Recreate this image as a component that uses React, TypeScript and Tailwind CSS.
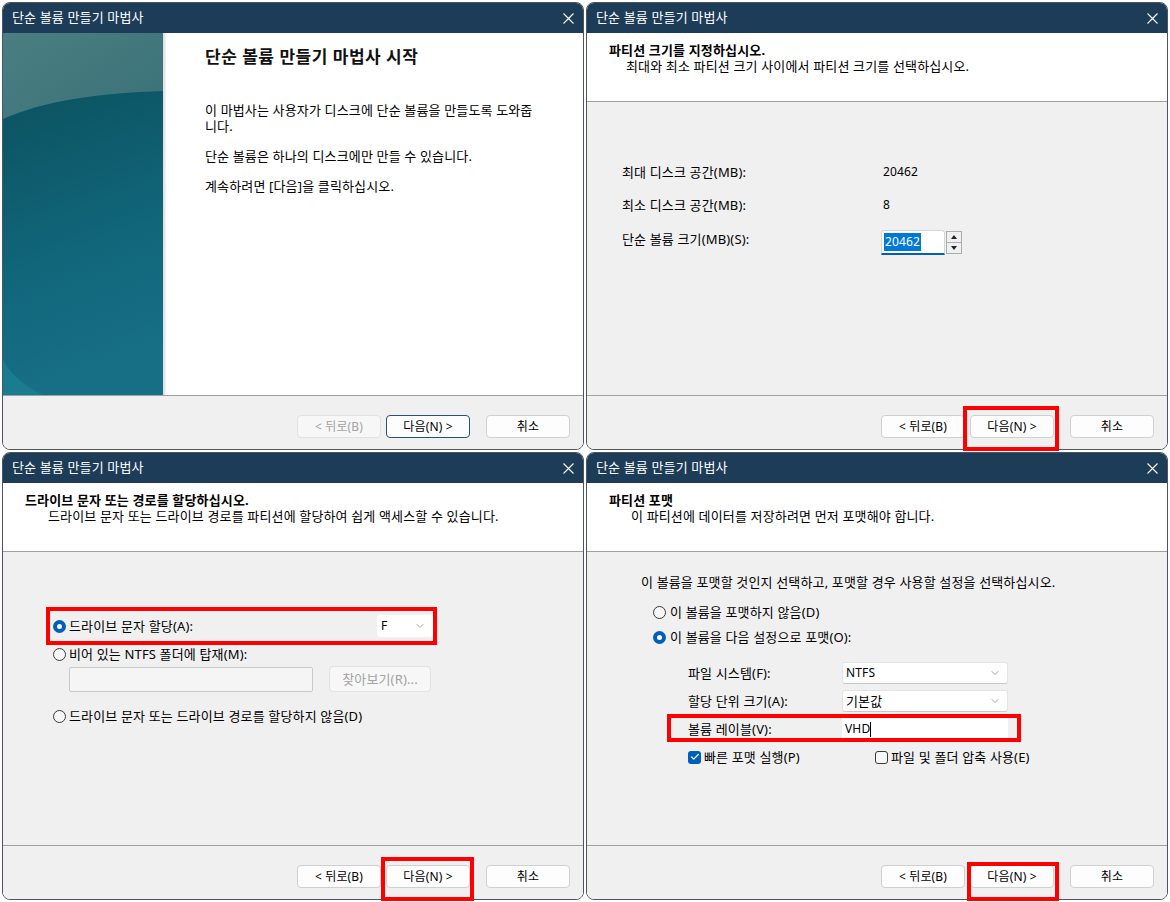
import React from "react";
import { ChevronDown, Check } from "lucide-react";

const TITLE = "단순 볼륨 만들기 마법사";

const CloseIcon = () => (
  <svg width="11" height="11" viewBox="0 0 11 11">
    <path d="M0.5 0.5L10.5 10.5M10.5 0.5L0.5 10.5" stroke="#fff" strokeWidth="1.1" />
  </svg>
);

const Btn = ({
  children,
  disabled,
  focused,
  className = "",
}: {
  children: React.ReactNode;
  disabled?: boolean;
  focused?: boolean;
  className?: string;
}) => {
  let look = "bg-[#fdfdfd] border-[#d0d0d0] text-black";
  if (disabled) look = "bg-[#f7f7f7] border-[#e2e2e2] text-[#a3a3a3]";
  if (focused) look = "bg-[#fdfdfd] border-[#2c4f72] text-black";
  return (
    <div
      className={`w-[84px] h-[23px] rounded-[4px] border flex items-center justify-center text-[12px] leading-[16px] ${look} ${className}`}
    >
      {children}
    </div>
  );
};

const Footer = ({ backDisabled, focusNext, redBox }: { backDisabled?: boolean; focusNext?: boolean; redBox?: string }) => (
  <div className="h-[54px] shrink-0 border-t border-[#a0a0a0] bg-[#f0f0f0] rounded-b-[7px] flex justify-end items-start pt-[19px] pr-[13px]">
    <Btn disabled={backDisabled}>&lt; 뒤로(B)</Btn>
    <div className="relative ml-[5px]">
      <Btn focused={focusNext}>다음(N) &gt;</Btn>
      {redBox && <div className={`absolute z-10 border-[4px] border-[#ff0000] ${redBox}`} />}
    </div>
    <Btn className="ml-[16px]">취소</Btn>
  </div>
);

const Win = ({ children, footer }: { children: React.ReactNode; footer: React.ReactNode }) => (
  <div className="flex flex-col border border-[#4d5560] rounded-[8px] bg-white">
    <div className="h-[30px] shrink-0 bg-[#1d3c58] rounded-t-[7px] flex items-center justify-between pl-[9px] pr-[9px] text-white text-[13px]">
      <span>{TITLE}</span>
      <CloseIcon />
    </div>
    <div className="flex-1 flex flex-col min-h-0">{children}</div>
    {footer}
  </div>
);

const Header = ({ title, sub, subPad }: { title: string; sub: string; subPad: string }) => (
  <div className="h-[69px] shrink-0 bg-white border-b border-[#a0a0a0] pl-[22px] pt-[9px] text-[13px] leading-[16px]">
    <div className="font-bold">{title}</div>
    <div className={subPad}>{sub}</div>
  </div>
);

const Radio = ({ checked }: { checked?: boolean }) =>
  checked ? (
    <span className="w-[13px] h-[13px] rounded-full bg-[#005fb8] flex items-center justify-center shrink-0">
      <span className="w-[5px] h-[5px] rounded-full bg-white" />
    </span>
  ) : (
    <span className="w-[13px] h-[13px] rounded-full border border-[#3a3a3a] bg-[#f7f7f7] shrink-0" />
  );

const CheckBox = ({ checked }: { checked?: boolean }) =>
  checked ? (
    <span className="w-[13px] h-[13px] rounded-[3px] bg-[#005fb8] flex items-center justify-center shrink-0">
      <Check size={10} strokeWidth={3} color="#fff" />
    </span>
  ) : (
    <span className="w-[13px] h-[13px] rounded-[3px] border border-[#3a3a3a] bg-[#f7f7f7] shrink-0" />
  );

const Select = ({ value, className = "" }: { value: string; className?: string }) => (
  <div
    className={`h-[22px] bg-white border border-[#e4e4e4] border-b-[#c8c8c8] rounded-[3px] flex items-center justify-between pl-[3px] pr-[6px] ${className}`}
  >
    <span>{value}</span>
    <ChevronDown size={12} strokeWidth={1.2} color="#666" />
  </div>
);

const SidePanel = () => (
  <svg width="160" height="362" viewBox="0 0 160 362" preserveAspectRatio="none" className="shrink-0 block">
    <defs>
      <linearGradient id="top" x1="0" y1="0" x2="0.3" y2="1">
        <stop offset="0" stopColor="#4a7e81" />
        <stop offset="1" stopColor="#2a666f" />
      </linearGradient>
      <linearGradient id="body" x1="0" y1="0" x2="0.2" y2="1">
        <stop offset="0" stopColor="#0b5260" />
        <stop offset="0.6" stopColor="#11667a" />
        <stop offset="1" stopColor="#176f86" />
      </linearGradient>
    </defs>
    <rect width="160" height="362" fill="url(#top)" />
    <rect y="300" width="160" height="62" fill="#1a7d8f" />
    <path d="M0 86 C40 68 95 60 160 58 L160 362 L40 362 C20 352 6 340 0 326 Z" fill="url(#body)" />
  </svg>
);

const PageStart = () => (
  <div className="flex-1 flex bg-white">
    <SidePanel />
    <div className="w-[4px] bg-gradient-to-r from-[#d9d9d9] to-white" />
    <div className="pl-[38px] pt-[13px] text-[13px] leading-[16px] text-black">
      <div className="text-[17px] leading-[22px] font-bold tracking-[0.5px] text-[#111]">단순 볼륨 만들기 마법사 시작</div>
      <p className="mt-[34px]">
        이 마법사는 사용자가 디스크에 단순 볼륨을 만들도록 도와줍
        <br />
        니다.
      </p>
      <p className="mt-[14px]">단순 볼륨은 하나의 디스크에만 만들 수 있습니다.</p>
      <p className="mt-[14px]">계속하려면 [다음]을 클릭하십시오.</p>
    </div>
  </div>
);

const PageSize = () => (
  <>
    <Header title="파티션 크기를 지정하십시오." sub="최대와 최소 파티션 크기 사이에서 파티션 크기를 선택하십시오." subPad="pl-[17px]" />
    <div className="flex-1 bg-[#f0f0f0] pl-[35px] pt-[62px] text-[13px] leading-[16px]">
      <div className="flex">
        <span className="w-[261px]">최대 디스크 공간(MB):</span>
        <span className="text-[12px]">20462</span>
      </div>
      <div className="flex mt-[17px]">
        <span className="w-[261px]">최소 디스크 공간(MB):</span>
        <span className="text-[12px]">8</span>
      </div>
      <div className="flex items-start mt-[17px]">
        <span className="w-[259px] mt-[1px]">단순 볼륨 크기(MB)(S):</span>
        <div className="w-[64px] h-[25px] bg-white border border-[#d5d5d5] border-b-[2px] border-b-[#005fb8] rounded-t-[3px] pl-[2px] pt-[2px] text-[12px]">
          <span className="inline-block bg-[#0078d7] text-white px-[1px] leading-[18px]">20462</span>
        </div>
        <div className="ml-[1px] mt-[1px] w-[16px] h-[23px] flex flex-col border border-[#acacac] bg-[#f0f0f0]">
          <div className="flex-1 border-b border-[#acacac] flex items-center justify-center">
            <svg width="6" height="4" viewBox="0 0 6 4"><path d="M0 4L3 0L6 4Z" fill="#222" /></svg>
          </div>
          <div className="flex-1 flex items-center justify-center">
            <svg width="6" height="4" viewBox="0 0 6 4"><path d="M0 0L3 4L6 0Z" fill="#222" /></svg>
          </div>
        </div>
      </div>
    </div>
  </>
);

const PageDrive = () => (
  <>
    <Header title="드라이브 문자 또는 경로를 할당하십시오." sub="드라이브 문자 또는 드라이브 경로를 파티션에 할당하여 쉽게 액세스할 수 있습니다." subPad="pl-[23px]" />
    <div className="flex-1 bg-[#f0f0f0] pl-[50px] pt-[63px] text-[13px] leading-[16px]">
      <div className="relative w-[380px] h-[22px] flex items-center">
        <Radio checked />
        <span className="ml-[3px]">드라이브 문자 할당(A):</span>
        <Select value="F" className="ml-auto w-[56px] text-[12px] border-white border-b-white" />
        <div className="absolute z-10 -left-[7px] -right-[4px] -top-[8px] -bottom-[8px] border-[4px] border-[#ff0000]" />
      </div>
      <div className="mt-[6px] h-[22px] flex items-center">
        <Radio />
        <span className="ml-[3px]">비어 있는 NTFS 폴더에 탑재(M):</span>
      </div>
      <div className="mt-[2px] flex items-start ml-[16px]">
        <div className="w-[244px] h-[25px] bg-[#f5f5f5] border border-[#c9c9c9] rounded-[2px]" />
        <div className="ml-[16px] -mt-[1px] w-[102px] h-[26px] rounded-[4px] border border-[#e2e2e2] bg-[#f7f7f7] text-[#a3a3a3] flex items-center justify-center">
          찾아보기(R)...
        </div>
      </div>
      <div className="mt-[13px] h-[22px] flex items-center">
        <Radio />
        <span className="ml-[3px]">드라이브 문자 또는 드라이브 경로를 할당하지 않음(D)</span>
      </div>
    </div>
  </>
);

const PageFormat = () => (
  <>
    <Header title="파티션 포맷" sub="이 파티션에 데이터를 저장하려면 먼저 포맷해야 합니다." subPad="pl-[22px]" />
    <div className="flex-1 bg-[#f0f0f0] pt-[22px] text-[13px] leading-[16px]">
      <div className="pl-[54px]">이 볼륨을 포맷할 것인지 선택하고, 포맷할 경우 사용할 설정을 선택하십시오.</div>
      <div className="pl-[66px] mt-[14px] h-[16px] flex items-center">
        <Radio />
        <span className="ml-[4px]">이 볼륨을 포맷하지 않음(D)</span>
      </div>
      <div className="pl-[66px] mt-[9px] h-[16px] flex items-center">
        <Radio checked />
        <span className="ml-[4px]">이 볼륨을 다음 설정으로 포맷(O):</span>
      </div>
      <div className="pl-[101px] mt-[17px]">
        <div className="flex items-center h-[22px]">
          <span className="w-[154px]">파일 시스템(F):</span>
          <Select value="NTFS" className="w-[166px] text-[12px]" />
        </div>
        <div className="flex items-center h-[22px] mt-[6px]">
          <span className="w-[154px]">할당 단위 크기(A):</span>
          <Select value="기본값" className="w-[166px]" />
        </div>
        <div className="relative w-[320px] flex items-center h-[22px] mt-[6px]">
          <span className="w-[154px]">볼륨 레이블(V):</span>
          <div className="w-[166px] h-[22px] bg-white pl-[3px] flex items-center text-[12px]">
            VHD<span className="w-[1px] h-[15px] bg-black" />
          </div>
          <div className="absolute z-10 -left-[21px] -right-[13px] -top-[4px] -bottom-[2px] border-[4px] border-[#ff0000]" />
        </div>
        <div className="flex items-center h-[16px] mt-[9px]">
          <div className="w-[187px] flex items-center">
            <CheckBox checked />
            <span className="ml-[3px]">빠른 포맷 실행(P)</span>
          </div>
          <CheckBox />
          <span className="ml-[3px]">파일 및 폴더 압축 사용(E)</span>
        </div>
      </div>
    </div>
  </>
);

export default function App() {
  return (
    <div className="w-[1170px] h-[902px] bg-white p-[2px] grid grid-cols-[582px_582px] grid-rows-[448px_448px] gap-[2px] font-['Noto_Sans','Noto_Sans_CJK_KR',sans-serif] tracking-[0.15px] text-black">
      <Win footer={<Footer backDisabled focusNext />}>
        <PageStart />
      </Win>
      <Win footer={<Footer redBox="-left-[7px] -right-[5px] -top-[9px] -bottom-[13px]" />}>
        <PageSize />
      </Win>
      <Win footer={<Footer redBox="-left-[5px] -right-[4px] -top-[8px] -bottom-[13px]" />}>
        <PageDrive />
      </Win>
      <Win footer={<Footer redBox="-left-[3px] -right-[5px] -top-[3px] -bottom-[13px]" />}>
        <PageFormat />
      </Win>
    </div>
  );
}
